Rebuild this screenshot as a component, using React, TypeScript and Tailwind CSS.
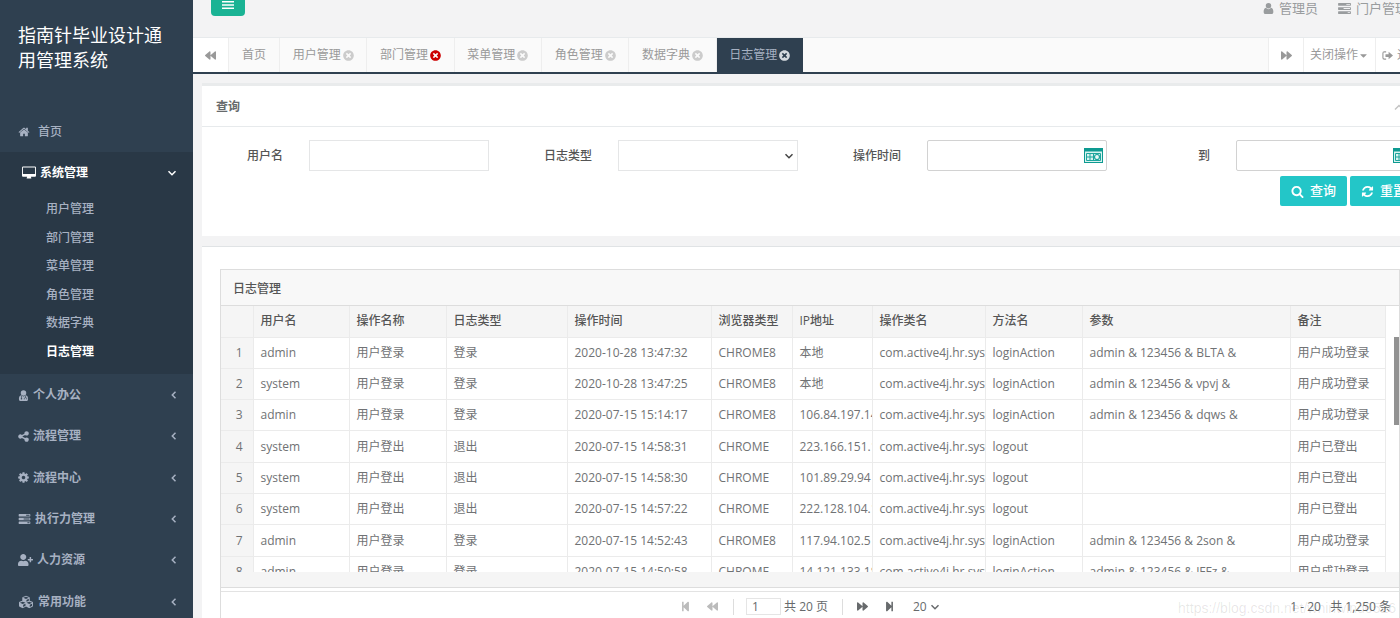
import type { ReactNode } from "react";
import {
  FaBackward,
  FaCaretDown,
  FaCubes,
  FaForward,
  FaStepBackward,
  FaStepForward,
  FaTimesCircle,
  FaUserPlus,
} from "react-icons/fa";

type IconProps = { className?: string };

function Glyph({ d, box = "0 0 1792 1792", className }: { d: string; box?: string; className?: string }) {
  return (
    <svg viewBox={box} fill="currentColor" className={className} aria-hidden="true">
      <path d={d} />
    </svg>
  );
}

const HomeIcon = ({ className }: IconProps) => (
  <Glyph
    className={className}
    d="M1472 992v480q0 26-19 45t-45 19h-384v-384h-256v384h-384q-26 0-45-19t-19-45v-480q0-1 .5-3t.5-3l575-474 575 474q1 2 1 6zm223-69l-62 74q-8 9-21 11h-3q-13 0-21-7l-692-577-692 577q-12 8-24 7-13-2-21-11l-62-74q-8-10-7-23.5t11-21.5l719-599q32-26 76-26t76 26l244 204v-195q0-14 9-23t23-9h192q14 0 23 9t9 23v408l219 182q10 8 11 21.5t-7 23.5z"
  />
);

const DesktopIcon = ({ className }: IconProps) => (
  <Glyph
    className={className}
    box="-64 0 1920 1792"
    d="M1728 992v-832q0-13-9.5-22.5t-22.5-9.5h-1600q-13 0-22.5 9.5t-9.5 22.5v832q0 13 9.5 22.5t22.5 9.5h1600q13 0 22.5-9.5t9.5-22.5zm128-832v1088q0 66-47 113t-113 47h-544q0 37 16 77.5t32 71 16 43.5q0 26-19 45t-45 19h-512q-26 0-45-19t-19-45q0-14 16-44t32-70 16-78h-544q-66 0-113-47t-47-113v-1088q0-66 47-113t113-47h1600q66 0 113 47t47 113z"
  />
);

const ShareIcon = ({ className }: IconProps) => (
  <Glyph
    className={className}
    box="100 100 1592 1592"
    d="M1344 1024q133 0 226.5 93.5t93.5 226.5-93.5 226.5-226.5 93.5-226.5-93.5-93.5-226.5q0-12 2-34l-360-180q-92 86-218 86-133 0-226.5-93.5t-93.5-226.5 93.5-226.5 226.5-93.5q126 0 218 86l360-180q-2-22-2-34 0-133 93.5-226.5t226.5-93.5 226.5 93.5 93.5 226.5-93.5 226.5-226.5 93.5q-126 0-218-86l-360 180q2 22 2 34t-2 34l360 180q92-86 218-86z"
  />
);

const CogIcon = ({ className }: IconProps) => (
  <Glyph
    className={className}
    box="100 100 1592 1592"
    d="M1152 896q0-106-75-181t-181-75-181 75-75 181 75 181 181 75 181-75 75-181zm512-109v222q0 12-8 23t-20 13l-185 28q-19 54-39 91 35 50 107 138 10 12 10 25t-9 23q-27 37-99 108t-94 71q-12 0-26-9l-138-108q-44 23-91 38-16 136-29 186-7 28-36 28h-222q-14 0-24.5-8.5t-11.5-21.5l-28-184q-49-16-90-37l-141 107q-10 9-25 9-14 0-25-11-126-114-165-168-7-10-7-23 0-12 8-23 15-21 51-66.5t54-70.5q-27-50-41-99l-183-27q-13-2-21-12.5t-8-23.5v-222q0-12 8-23t19-13l186-28q14-46 39-92-40-57-107-138-10-12-10-24 0-10 9-23 26-36 98.5-107.5t94.5-71.5q13 0 26 10l138 107q44-23 91-38 16-136 29-186 7-28 36-28h222q14 0 24.5 8.5t11.5 21.5l28 184q49 16 90 37l142-107q9-9 24-9 13 0 25 10 129 119 165 170 7 8 7 22 0 12-8 23-15 21-51 66.5t-54 70.5q26 50 41 98l183 28q13 2 21 12.5t8 23.5z"
  />
);

const SearchIcon = ({ className }: IconProps) => (
  <Glyph
    className={className}
    d="M1216 832q0-185-131.5-316.5t-316.5-131.5-316.5 131.5-131.5 316.5 131.5 316.5 316.5 131.5 316.5-131.5 131.5-316.5zm512 832q0 52-38 90t-90 38q-54 0-90-38l-343-342q-179 124-399 124-143 0-273.5-55.5t-225-150-150-225-55.5-273.5 55.5-273.5 150-225 225-150 273.5-55.5 273.5 55.5 225 150 150 225 55.5 273.5q0 220-124 399l343 343q37 37 37 90z"
  />
);

const RefreshIcon = ({ className }: IconProps) => (
  <Glyph
    className={className}
    d="M1639 1056q0 5-1 7-64 268-268 434.5t-478 166.5q-146 0-282.5-55t-243.5-157l-129 129q-19 19-45 19t-45-19-19-45v-448q0-26 19-45t45-19h448q26 0 45 19t19 45-19 45l-137 137q71 66 161 102t187 36q134 0 250-65t186-179q11-17 53-117 8-23 30-23h192q13 0 22.5 9.5t9.5 22.5zm25-800v448q0 26-19 45t-45 19h-448q-26 0-45-19t-19-45 19-45l138-138q-148-137-349-137-134 0-250 65t-186 179q-11 17-53 117-8 23-30 23h-199q-13 0-22.5-9.5t-9.5-22.5v-7q65-268 270-434.5t480-166.5q146 0 284 55.5t245 156.5l130-129q19-19 45-19t45 19 19 45z"
  />
);

const TasksIcon = ({ className }: IconProps) => (
  <svg viewBox="0 0 14 12" fill="currentColor" className={className} aria-hidden="true">
    <path
      fillRule="evenodd"
      d="M.5 0h13a.5.5 0 0 1 .5.5v2a.5.5 0 0 1-.5.5H.5a.5.5 0 0 1-.5-.5v-2A.5.5 0 0 1 .5 0zM9 1v1h4V1zM.5 4.5h13a.5.5 0 0 1 .5.5v2a.5.5 0 0 1-.5.5H.5A.5.5 0 0 1 0 7V5a.5.5 0 0 1 .5-.5zM6 5.500v1h7v-1zM.5 9h13a.5.5 0 0 1 .5.5v2a.5.5 0 0 1-.5.5H.5a.5.5 0 0 1-.5-.5v-2A.5.5 0 0 1 .5 9zM10.500 10v1H13v-1z"
    />
  </svg>
);

const UserIcon = ({ className }: IconProps) => (
  <svg viewBox="0 0 12 12" fill="currentColor" className={className} aria-hidden="true">
    <circle cx="6" cy="3.100" r="3" />
    <path d="M3.200 5.300C1.300 5.800.7 7.700.7 9.800.7 11.200 1.500 12 2.700 12h6.600c1.200 0 2-.8 2-2.200 0-2.100-.6-4-2.500-4.500C8 6.200 7 6.700 6 6.700s-2-.5-2.800-1.400z" />
  </svg>
);

const DoctorIcon = ({ className }: IconProps) => (
  <svg viewBox="0 0 10 12" fill="currentColor" className={className} aria-hidden="true">
    <circle cx="5" cy="3.200" r="3" />
    <path d="M2.500 5.800C.6 6.300 0 7.800 0 9.800 0 11.200.7 12 1.800 12h6.400c1.100 0 1.800-.8 1.800-2.200 0-2-.6-3.500-2.500-4C6.800 6.600 6 7 5 7s-1.800-.4-2.500-1.200z" />
    <path d="M2.800 6.500v2.300M7.200 6.500v1.700M5.900 10.200V9.500q0-1.200 1.300-1.200t1.300 1.200v.7" fill="none" stroke="#2f4050" strokeWidth=".7" />
    <circle cx="2.800" cy="9.600" r=".8" fill="#2f4050" />
  </svg>
);

const SignOutIcon = ({ className }: IconProps) => (
  <svg viewBox="0 0 12 12" className={className} aria-hidden="true">
    <path d="M4.500 2H2.500Q1 2 1 3.500v5Q1 10 2.500 10h2" fill="none" stroke="currentColor" strokeWidth="1.200" />
    <path d="M3.800 4.500h3.400V2L12 6 7.200 10V7.500H3.800z" fill="currentColor" />
  </svg>
);

const CalendarIcon = ({ className }: IconProps) => (
  <svg viewBox="0 0 19 15" className={className} aria-hidden="true">
    <rect width="19" height="15" fill="#0e9a91" />
    <rect x="1" y="3.500" width="17" height="10.500" fill="#d8f3f0" />
    <path d="M2.500 5.500h14v7h-14zM2.500 9h8M6 5.500v7M9.500 5.500v7" fill="none" stroke="#1ca69d" />
    <circle cx="13" cy="9" r="2.500" fill="#eefaf9" stroke="#1ca69d" strokeWidth="1.200" />
    <path d="M13 5.700v1M13 11.300v1M9.700 9h1M15.300 9h1" stroke="#1ca69d" />
  </svg>
);

function Chevron({ d, className }: { d: string; className?: string }) {
  return (
    <svg viewBox="0 0 10 10" fill="none" stroke="currentColor" strokeWidth="1.500" className={className} aria-hidden="true">
      <path d={d} />
    </svg>
  );
}

const DOWN = "M1.500 3.200 5 6.700 8.500 3.200";
const LEFT = "M7.500 1.800 4.300 5 7.500 8.200";
const UP = "M1 7.500 5 3.500 9 7.500";

const subMenu = ["用户管理", "部门管理", "菜单管理", "角色管理", "数据字典", "日志管理"];

const menu: { label: string; icon: ReactNode }[] = [
  { label: "个人办公", icon: <DoctorIcon className="h-[11px] w-[11px]" /> },
  { label: "流程管理", icon: <ShareIcon className="size-[11px]" /> },
  { label: "流程中心", icon: <CogIcon className="size-[11px]" /> },
  { label: "执行力管理", icon: <TasksIcon className="h-[10px] w-[13px]" /> },
  { label: "人力资源", icon: <FaUserPlus className="h-3 w-[15px]" /> },
  { label: "常用功能", icon: <FaCubes className="h-[14px] w-4" /> },
];

const tabs = ["用户管理", "部门管理", "菜单管理", "角色管理", "数据字典", "日志管理"];

const columns = [
  { label: "", width: "w-8" },
  { label: "用户名", width: "w-24" },
  { label: "操作名称", width: "w-[97px]" },
  { label: "日志类型", width: "w-[121px]" },
  { label: "操作时间", width: "w-36" },
  { label: "浏览器类型", width: "w-[81px]" },
  { label: "IP地址", width: "w-20" },
  { label: "操作类名", width: "w-[113px]" },
  { label: "方法名", width: "w-[97px]" },
  { label: "参数", width: "w-52" },
  { label: "备注", width: "w-[95px]" },
];

const CLASS_NAME = "com.active4j.hr.system.controller";

const rows = [
  ["admin", "用户登录", "登录", "2020-10-28 13:47:32", "CHROME8", "本地", CLASS_NAME, "loginAction", "admin & 123456 & BLTA &", "用户成功登录"],
  ["system", "用户登录", "登录", "2020-10-28 13:47:25", "CHROME8", "本地", CLASS_NAME, "loginAction", "admin & 123456 & vpvj &", "用户成功登录"],
  ["admin", "用户登录", "登录", "2020-07-15 15:14:17", "CHROME8", "106.84.197.144", CLASS_NAME, "loginAction", "admin & 123456 & dqws &", "用户成功登录"],
  ["system", "用户登出", "退出", "2020-07-15 14:58:31", "CHROME", "223.166.151.10", CLASS_NAME, "logout", "", "用户已登出"],
  ["system", "用户登出", "退出", "2020-07-15 14:58:30", "CHROME", "101.89.29.94", CLASS_NAME, "logout", "", "用户已登出"],
  ["system", "用户登出", "退出", "2020-07-15 14:57:22", "CHROME", "222.128.104.10", CLASS_NAME, "logout", "", "用户已登出"],
  ["admin", "用户登录", "登录", "2020-07-15 14:52:43", "CHROME8", "117.94.102.5", CLASS_NAME, "loginAction", "admin & 123456 & 2son &", "用户成功登录"],
  ["admin", "用户登录", "登录", "2020-07-15 14:50:58", "CHROME", "14.121.133.188", CLASS_NAME, "loginAction", "admin & 123456 & JFFz &", "用户成功登录"],
];

function Sidebar() {
  return (
    <nav className="w-[193px] shrink-0 bg-[#2f4050] font-bold text-[#a7b1c2]">
      <h1 className="h-[111px] px-[18px] pt-[23px] text-lg/[25px] font-normal text-white">指南针毕业设计通用管理系统</h1>
      <a href="#" className="flex h-[41px] items-center gap-2 px-[18px] pt-px font-medium">
        <HomeIcon className="size-3" />
        首页
      </a>
      <div className="bg-[#293846] pb-2">
        <a href="#" className="flex h-[41px] items-center gap-1 pt-px pr-4 pl-[22px] text-white">
          <DesktopIcon className="size-[14px]" />
          系统管理
          <Chevron d={DOWN} className="ml-auto size-[10px]" />
        </a>
        <ul className="grid h-[173px] grid-rows-6 pt-[2px]">
          {subMenu.map((label) => (
            <li key={label} className="flex items-center pl-[46px]">
              <a href="#" className={label === "日志管理" ? "text-white" : "font-medium"}>
                {label}
              </a>
            </li>
          ))}
        </ul>
      </div>
      <div className="grid h-[248px] grid-rows-6">
        {menu.map(({ label, icon }) => (
          <a key={label} href="#" className="flex items-center gap-1 pt-px pr-[15px] pl-[18px]">
            {icon}
            <span>{label}</span>
            <Chevron d={LEFT} className="ml-auto size-[10px]" />
          </a>
        ))}
      </div>
    </nav>
  );
}

function TopBar() {
  return (
    <header className="flex h-[37px] items-start justify-between pl-[18px]">
      <button type="button" aria-label="菜单" className="flex h-4 w-[34px] justify-center rounded-b-sm bg-[#1ab394] text-white">
        <svg viewBox="0 0 12 10" fill="currentColor" className="h-[10px] w-3" aria-hidden="true">
          <path d="M0 1h12v1.600H0zM0 4.200h12v1.600H0zM0 7.400h12V9H0z" />
        </svg>
      </button>
      <div className="flex gap-5 text-[13px]/[17px] text-[#999c9e]">
        <a href="#" className="flex items-center gap-[5px]">
          <UserIcon className="size-[11px]" />
          管理员
        </a>
        <a href="#" className="flex w-[89px] items-center gap-[5px] whitespace-nowrap">
          <TasksIcon className="h-[11px] w-[13px]" />
          门户管理
        </a>
      </div>
    </header>
  );
}

function TabBar() {
  return (
    <div className="flex h-[37px] border-t border-b-2 border-t-[#e7eaec] border-b-[#2f4050] bg-[#fafafa] text-[#999]">
      <button type="button" aria-label="向左" className="flex w-9 items-center justify-center border-r border-[#eee] bg-white">
        <FaBackward className="size-[11px]" />
      </button>
      <a href="#" className="flex w-[51px] items-center justify-center border-r border-[#eee]">
        首页
      </a>
      <div className="flex w-[523px]">
        {tabs.map((label) => (
          <a
            key={label}
            href="#"
            className={
              label === "日志管理"
                ? "flex flex-1 items-center justify-center gap-[2px] bg-[#2f4050] text-[#a7b1c2]"
                : "flex flex-1 items-center justify-center gap-[2px] border-r border-[#eee]"
            }
          >
            {label}
            <FaTimesCircle
              className={
                label === "部门管理" ? "size-[11px] text-[#c00]" : label === "日志管理" ? "size-[11px] text-[#d5dadf]" : "size-[11px] text-[#ccc]"
              }
            />
          </a>
        ))}
      </div>
      <button type="button" aria-label="向右" className="ml-auto flex w-9 items-center justify-center border-x border-[#eee] bg-white">
        <FaForward className="size-[11px]" />
      </button>
      <button type="button" className="flex w-[72px] items-center justify-center border-r border-[#eee] bg-white">
        关闭操作
        <FaCaretDown className="size-[11px]" />
      </button>
      <a href="#" className="flex w-[51px] items-center justify-center gap-1 bg-white">
        <SignOutIcon className="size-[11px]" />
        退出
      </a>
    </div>
  );
}

function Field({ id, label, children }: { id: string; label: string; children: ReactNode }) {
  return (
    <div className="flex items-center">
      <label htmlFor={id} className="w-1/3 pr-[13px] text-right font-medium text-[#555]">
        {label}
      </label>
      <div className="relative w-2/3 px-[13px]">{children}</div>
    </div>
  );
}

function SearchPanel() {
  return (
    <section className="mx-[9px] mt-[9px] h-[153px] border-t-[3px] border-[#e9ebec] bg-white">
      <div className="flex h-[41px] items-center justify-between border-b border-[#e7eaec] px-[14px] pt-px">
        <h2 className="font-bold text-[#676a6c]">查询</h2>
        <Chevron d={UP} className="size-[10px] text-[#c4c4c4]" />
      </div>
      <form className="-mr-[11px] -ml-[9px] pt-[13px]">
        <div className="grid grid-cols-4">
          <Field id="userName" label="用户名">
            <input id="userName" type="text" className="block h-[31px] w-full border border-[#e5e6e7] bg-white px-2" />
          </Field>
          <Field id="logType" label="日志类型">
            <select id="logType" className="block h-[31px] w-full appearance-none border border-[#e5e6e7] bg-white px-2">
              <option></option>
            </select>
            <Chevron d={DOWN} className="pointer-events-none absolute top-[11px] right-[17px] size-[10px] text-[#444]" />
          </Field>
          <Field id="startTime" label="操作时间">
            <input id="startTime" type="text" className="block h-[31px] w-full rounded-xs border border-[#d2d2d2] bg-white px-2" />
            <CalendarIcon className="pointer-events-none absolute top-2 right-[17px] h-[15px] w-[19px]" />
          </Field>
          <Field id="endTime" label="到">
            <input id="endTime" type="text" className="block h-[31px] w-full rounded-xs border border-[#d2d2d2] bg-white px-2" />
            <CalendarIcon className="pointer-events-none absolute top-2 right-[17px] h-[15px] w-[19px]" />
          </Field>
        </div>
        <div className="mt-[5px] flex justify-end gap-[3px] pr-3 text-[13px] font-medium text-white">
          <button type="button" className="flex h-[30px] w-[67px] items-center justify-center gap-[6px] rounded-xs bg-[#23c6c8]">
            <SearchIcon className="size-[13px]" />
            查询
          </button>
          <button type="reset" className="flex h-[30px] w-[67px] items-center justify-center gap-[6px] rounded-xs bg-[#23c6c8]">
            <RefreshIcon className="size-[13px]" />
            重置
          </button>
        </div>
      </form>
    </section>
  );
}

function LogTable() {
  return (
    <table className="h-[282px] w-[1164px] shrink-0 table-fixed text-left">
      <thead className="bg-[#f5f5f5] text-[#555]">
        <tr className="h-[31px]">
          {columns.map(({ label, width }) => (
            <th key={label} className={`${width} overflow-hidden border-r border-b border-[#ebebeb] p-0 pl-[7px] font-medium whitespace-nowrap`}>
              {label}
            </th>
          ))}
        </tr>
      </thead>
      <tbody className="text-[#707274]">
        {rows.map((row, i) => (
          <tr key={row[3]}>
            <td className="border-r border-b border-[#ebebeb] bg-[#f5f5f5] p-0 pl-[5px] text-center">{i + 1}</td>
            {row.map((cell, j) => (
              <td key={j} className="overflow-hidden border-r border-b border-[#ebebeb] p-0 pl-[7px] whitespace-nowrap">
                {cell}
              </td>
            ))}
          </tr>
        ))}
      </tbody>
    </table>
  );
}

function Pager() {
  return (
    <div className="relative flex h-[30px] items-center justify-center border-t border-[#e3e3e3] text-[#676a6c]">
      <button type="button" aria-label="首页" className="mr-4 text-[#bbb]">
        <FaStepBackward className="size-[11px]" />
      </button>
      <button type="button" aria-label="上一页" className="mr-[15px] text-[#bbb]">
        <FaBackward className="size-[11px]" />
      </button>
      <span className="mr-3 h-4 w-px bg-[#ddd]" />
      <input aria-label="页码" defaultValue="1" className="mr-[3px] h-[17px] w-[35px] border border-[#e5e5e5] px-[5px]" />
      <span>共 20 页</span>
      <span className="mx-[14px] h-4 w-px bg-[#ddd]" />
      <button type="button" aria-label="下一页" className="mr-4">
        <FaForward className="size-[11px]" />
      </button>
      <button type="button" aria-label="末页" className="mr-[18px]">
        <FaStepForward className="size-[11px]" />
      </button>
      <div className="relative">
        <select aria-label="每页条数" className="block w-[27px] appearance-none bg-transparent">
          <option>20</option>
        </select>
        <Chevron d={DOWN} className="pointer-events-none absolute top-[3px] right-0 size-[10px]" />
      </div>
      <span className="absolute right-2 whitespace-pre">1 - 20   共 1,250 条</span>
    </div>
  );
}

function LogPanel() {
  return (
    <section className="mx-[9px] mt-[10px] border-t border-[#e0e3e5] bg-white px-[18px] pt-[22px]">
      <div className="border border-[#ddd]">
        <h2 className="flex h-9 items-center border-b border-[#ddd] bg-[#f8f8f8] pt-[3px] pl-3 font-medium text-[#555]">日志管理</h2>
        <div className="flex h-[266px] overflow-hidden">
          <LogTable />
          <div className="mt-[31px] ml-auto h-[88px] w-[5px] bg-[#929292]" />
        </div>
        <div className="mb-[3px] h-4 border-b border-[#ddd] bg-[#f5f5f5]" />
        <Pager />
      </div>
    </section>
  );
}

export default function App() {
  return (
    <div className="relative flex h-screen overflow-hidden bg-[#f3f3f4] font-['Open_Sans','Noto_Sans_CJK_SC',sans-serif] text-xs text-[#676a6c]">
      <Sidebar />
      <main className="min-w-0 flex-1">
        {/* El contenido es más ancho que la ventana */}
        <div className="-mr-[27px]">
          <TopBar />
          <TabBar />
          <SearchPanel />
          <LogPanel />
        </div>
      </main>
      <span className="pointer-events-none absolute right-1 bottom-0 font-['Liberation_Sans',sans-serif] text-sm text-black/10">
        https://blog.csdn.net/whirlwind0526
      </span>
    </div>
  );
}
